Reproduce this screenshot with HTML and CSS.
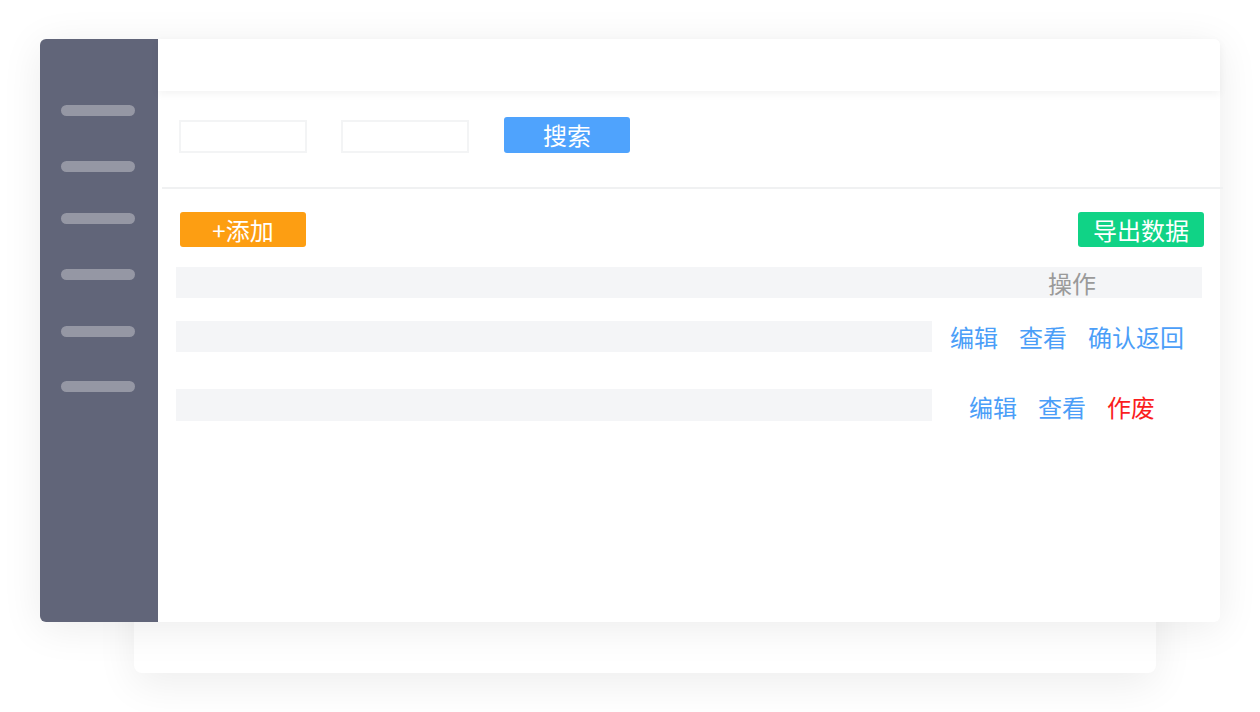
FILE: index.html
```html
<!DOCTYPE html>
<html lang="zh">
<head>
<meta charset="utf-8">
<title>管理后台</title>
<link rel="stylesheet" href="styles.css">
</head>
<body>
<div class="stage">
  <div class="back-card"></div>
  <div class="window">
    <aside class="sidebar">
      <span class="nav-bar"></span>
      <span class="nav-bar"></span>
      <span class="nav-bar"></span>
      <span class="nav-bar"></span>
      <span class="nav-bar"></span>
      <span class="nav-bar"></span>
    </aside>
    <main class="main">
      <header class="topbar"></header>
      <section class="search">
        <div class="input"></div>
        <div class="input"></div>
        <button class="btn btn-blue">搜索</button>
      </section>
      <div class="divider"></div>
      <section class="toolbar">
        <button class="btn btn-orange">+添加</button>
        <button class="btn btn-green">导出数据</button>
      </section>
      <section class="table">
        <div class="thead">
          <div class="cell-main"></div>
          <div class="cell-actions head-actions">操作</div>
        </div>
        <div class="row row-1">
          <div class="cell-main bar"></div>
          <div class="cell-actions">
            <a class="link">编辑</a><a class="link">查看</a><a class="link">确认返回</a>
          </div>
        </div>
        <div class="row row-2">
          <div class="cell-main bar"></div>
          <div class="cell-actions shift-left">
            <a class="link">编辑</a><a class="link">查看</a><a class="link danger">作废</a>
          </div>
        </div>
      </section>
    </main>
  </div>
</div>
</body>
</html>
```
FILE: styles.css
```css
* { box-sizing: border-box; }
html, body { margin: 0; padding: 0; background: #ffffff; }
body {
  font-family: "Noto Sans CJK SC", "Noto Sans", sans-serif;
  width: 1260px;
  height: 712px;
  overflow: hidden;
}
.stage {
  display: grid;
  padding: 39px 40px 0 40px;
}
.back-card {
  grid-area: 1 / 1;
  margin: 50px 64px 0 94px;
  height: 584px;
  background: #ffffff;
  border-radius: 8px;
  box-shadow: 0 12px 40px rgba(0, 0, 0, 0.07);
}
.window {
  grid-area: 1 / 1;
  align-self: start;
  height: 583px;
  display: flex;
  border-radius: 6px;
  background: #ffffff;
  box-shadow: 0 6px 40px rgba(0, 0, 0, 0.08);
  position: relative;
  z-index: 1;
}
.sidebar {
  width: 118px;
  flex: none;
  background: #616579;
  border-radius: 6px 0 0 6px;
  display: flex;
  flex-direction: column;
  align-items: flex-start;
  padding: 66px 0 0 21px;
}
.nav-bar {
  display: block;
  width: 74px;
  height: 11px;
  border-radius: 6px;
  background: #9597a4;
}
.nav-bar:nth-child(2) { margin-top: 45px; }
.nav-bar:nth-child(3) { margin-top: 41px; }
.nav-bar:nth-child(4) { margin-top: 45px; }
.nav-bar:nth-child(5) { margin-top: 46px; }
.nav-bar:nth-child(6) { margin-top: 44px; }
.main {
  flex: 1;
  display: flex;
  flex-direction: column;
  border-radius: 0 6px 6px 0;
  min-width: 0;
}
.topbar {
  height: 52px;
  flex: none;
  background: #ffffff;
  border-radius: 0 6px 0 0;
  box-shadow: 0 3px 8px rgba(0, 0, 0, 0.05);
  position: relative;
  z-index: 1;
}
.search {
  height: 96px;
  display: flex;
  align-items: flex-start;
  padding: 26px 0 0 21px;
}
.input {
  width: 128px;
  height: 33px;
  margin-top: 3px;
  border: 2px solid #f3f4f5;
  background: #ffffff;
  margin-right: 34px;
}
.input + .input { margin-right: 35px; }
.btn {
  border: none;
  outline: none;
  padding: 0;
  width: 126px;
  height: 35px;
  border-radius: 3px;
  color: #ffffff;
  font-family: "Noto Sans CJK SC", "Noto Sans", sans-serif;
  font-size: 24px;
  line-height: 1;
  display: flex;
  align-items: center;
  justify-content: center;
}
.btn-blue { background: #4fa3fd; height: 36px; }
.btn-orange { background: #fd9e12; }
.btn-green { background: #10d386; }
.divider {
  height: 2px;
  background: #f0f1f2;
  margin: 0 -3px 0 4px;
}
.toolbar {
  display: flex;
  justify-content: space-between;
  padding: 23px 16px 0 22px;
}
.table {
  padding: 20px 18px 0 18px;
  display: flex;
  flex-direction: column;
}
.thead {
  display: flex;
  height: 31px;
  background: #f4f5f7;
  align-items: center;
}
.cell-main { width: 756px; flex: none; }
.cell-actions {
  flex: 1;
  display: flex;
  justify-content: center;
  align-items: center;
  gap: 21px;
  font-size: 24px;
  line-height: 1;
}
.head-actions {
  color: #9a9a9a;
  padding-left: 10px;
}
.row {
  display: flex;
  align-items: flex-start;
}
.row-1 { margin-top: 23px; }
.row-2 { margin-top: 37px; }
.bar {
  height: 31px;
  background: #f4f5f7;
}
.row-2 .bar { height: 32px; }
.row .cell-actions { height: 31px; }
.row-2 .cell-actions { height: 35px; }
.shift-left { padding-right: 10px; }
.link {
  color: #4b9ef8;
  text-decoration: none;
  white-space: nowrap;
}
.link.danger { color: #fa1e1e; }
```
